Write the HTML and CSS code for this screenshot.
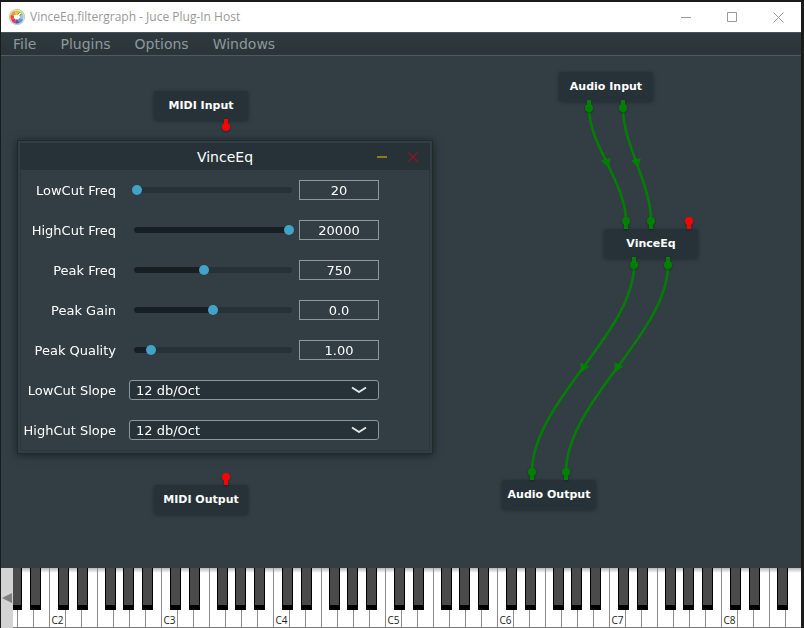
FILE: index.html
```html
<!DOCTYPE html>
<html lang="en">
<head>
<meta charset="utf-8">
<title>VinceEq.filtergraph - Juce Plug-In Host</title>
<link rel="stylesheet" href="styles.css">
</head>
<body>
<div class="app">
  <header class="titlebar">
    <svg class="logo" width="16" height="16" viewBox="0 0 16 16" aria-hidden="true">
      <circle cx="8" cy="8" r="8" fill="#b3cf9c"/>
      <circle cx="8" cy="8" r="7.200" fill="#f4f4ee"/>
      <path d="M8 8 5.600 1.800A6.600 6.600 0 0 1 10.400 1.800Z" fill="#ecc531"/>
      <path d="M8 8 10.400 1.800A6.600 6.600 0 0 1 14.200 5.600Z" fill="#b5cf6a"/>
      <path d="M8 8 14.200 5.600A6.600 6.600 0 0 1 14.200 10.400Z" fill="#a8bfe0"/>
      <path d="M8 8 14.200 10.400A6.600 6.600 0 0 1 10.400 14.200Z" fill="#4f9bdc"/>
      <path d="M8 8 10.400 14.200A6.600 6.600 0 0 1 5.600 14.200Z" fill="#6a4fae"/>
      <path d="M8 8 5.600 14.200A6.600 6.600 0 0 1 1.800 10.400Z" fill="#d93a78"/>
      <path d="M8 8 1.800 10.400A6.600 6.600 0 0 1 1.800 5.600Z" fill="#e8502e"/>
      <path d="M8 8 1.800 5.600A6.600 6.600 0 0 1 5.600 1.800Z" fill="#f09a30"/>
      <path d="M5 6.500L7 5.500L8.500 6L11 3.500L12 4.500L10.500 6.500L11 8.500L9.500 10.500H6.500L5 9Z" fill="#fff"/>
      <path d="M8.500 5.500L10.500 3.500M10.800 6.800L12 5" fill="none" stroke="#555" stroke-width=".7"/>
    </svg>
    <h1 class="titlebar-text">VinceEq.filtergraph - Juce Plug-In Host</h1>
    <div class="window-buttons">
      <button type="button" aria-label="Minimize"><svg width="11" height="11" viewBox="0 0 11 11"><path d="M0 5.500H10"/></svg></button>
      <button type="button" aria-label="Maximize"><svg width="11" height="11" viewBox="0 0 11 11"><path d="M.5.5h9v9h-9z"/></svg></button>
      <button type="button" aria-label="Close"><svg width="11" height="11" viewBox="0 0 11 11"><path d="M.5.5l10 10M10.500.5l-10 10"/></svg></button>
    </div>
  </header>

  <nav class="menubar" aria-label="Main menu">
    <button type="button">File</button>
    <button type="button">Plugins</button>
    <button type="button">Options</button>
    <button type="button">Windows</button>
  </nav>

  <main class="graph">
    <div class="node midi-input">MIDI Input</div>
    <div class="node midi-output">MIDI Output</div>
    <div class="node audio-input">Audio Input</div>
    <div class="node vince-eq">VinceEq</div>
    <div class="node audio-output">Audio Output</div>

    <svg class="wires" width="801" height="512" viewBox="1 56 801 512" aria-hidden="true">
      <defs>
        <g id="pin-out"><path d="M-2-8h4v7h-4z"/><circle r="4"/></g>
        <g id="pin-in"><path d="M-2 0h4v8h-4z"/><circle r="4"/></g>
        <path id="arrow" d="M-4-5v10L5 0z"/>
      </defs>
      <g class="wire">
        <path d="M589 108C589 145 626 183 626 221"/>
        <path d="M623 108C623 145 651 183 651 221"/>
        <path d="M634 265C634 333 532 402 532 472"/>
        <path d="M668 265C668 333 566 402 566 472"/>
      </g>
      <g class="audio">
        <use href="#arrow" transform="translate(607 163) rotate(72)"/>
        <use href="#arrow" transform="translate(637 163) rotate(76)"/>
        <use href="#arrow" transform="translate(583 368) rotate(116)"/>
        <use href="#arrow" transform="translate(617 368) rotate(116)"/>
      </g>
      <g class="audio pins">
        <use href="#pin-out" x="589" y="108"/>
        <use href="#pin-out" x="623" y="108"/>
        <use href="#pin-in" x="626" y="221"/>
        <use href="#pin-in" x="651" y="221"/>
        <use href="#pin-out" x="634" y="265"/>
        <use href="#pin-out" x="668" y="265"/>
        <use href="#pin-in" x="532" y="472"/>
        <use href="#pin-in" x="566" y="472"/>
      </g>
      <g class="midi pins">
        <use href="#pin-out" x="226" y="127"/>
        <use href="#pin-in" x="226" y="477"/>
        <use href="#pin-in" x="689" y="221"/>
      </g>
    </svg>

    <section class="plugin" aria-labelledby="plugin-title">
      <header class="plugin-bar">
        <h2 id="plugin-title">VinceEq</h2>
        <div class="plugin-buttons">
          <button type="button" aria-label="Minimize VinceEq"><svg width="12" height="12" viewBox="0 0 12 12"><path d="M1 6h10" stroke="#937a14" stroke-width="2"/></svg></button>
          <button type="button" aria-label="Close VinceEq"><svg width="12" height="12" viewBox="0 0 12 12"><path d="M1 1l10 10M11 1L1 11" stroke="#8b1520" stroke-width="1.300"/></svg></button>
        </div>
      </header>
      <form class="params">
        <div class="param">
          <label for="lowcut">LowCut Freq</label>
          <input id="lowcut" class="slider" type="range" min="0" max="1000" value="0" style="--fill:0%">
          <input class="value" type="text" value="20" aria-label="LowCut Freq value">
        </div>
        <div class="param">
          <label for="highcut">HighCut Freq</label>
          <input id="highcut" class="slider" type="range" min="0" max="1000" value="1000" style="--fill:100%">
          <input class="value" type="text" value="20000" aria-label="HighCut Freq value">
        </div>
        <div class="param">
          <label for="peak-freq">Peak Freq</label>
          <input id="peak-freq" class="slider" type="range" min="0" max="1000" value="439" style="--fill:44%">
          <input class="value" type="text" value="750" aria-label="Peak Freq value">
        </div>
        <div class="param">
          <label for="peak-gain">Peak Gain</label>
          <input id="peak-gain" class="slider" type="range" min="0" max="1000" value="500" style="--fill:50%">
          <input class="value" type="text" value="0.0" aria-label="Peak Gain value">
        </div>
        <div class="param">
          <label for="peak-quality">Peak Quality</label>
          <input id="peak-quality" class="slider" type="range" min="0" max="1000" value="91" style="--fill:10%">
          <input class="value" type="text" value="1.00" aria-label="Peak Quality value">
        </div>
        <div class="param">
          <label for="lowcut-slope">LowCut Slope</label>
          <div class="combo">
            <select id="lowcut-slope"><option>12 db/Oct</option></select>
            <svg width="16" height="8" viewBox="0 0 16 8" aria-hidden="true"><path d="M1 1.500L8 6L15 1.500"/></svg>
          </div>
        </div>
        <div class="param">
          <label for="highcut-slope">HighCut Slope</label>
          <div class="combo">
            <select id="highcut-slope"><option>12 db/Oct</option></select>
            <svg width="16" height="8" viewBox="0 0 16 8" aria-hidden="true"><path d="M1 1.500L8 6L15 1.500"/></svg>
          </div>
        </div>
      </form>
    </section>
  </main>

  <footer class="keyboard">
    <button type="button" class="scroll-left" aria-label="Lower octaves"><svg width="10" height="10" viewBox="0 0 10 10"><path d="M0 5L10 0V10Z" fill="#808080"/></svg></button>
    <div class="keys" id="keys"></div>
  </footer>
</div>
<script src="keyboard.js"></script>
</body>
</html>
```
FILE: keyboard.js
```js
// Builds the keys from C1 up to the top note, G8.
const keys = document.getElementById('keys');
const lastOctave = 8;
for (let octave = 1; octave <= lastOctave; octave++) {
  const isLast = octave === lastOctave;
  const group = document.createElement('div');
  group.className = 'octave';
  for (const note of isLast ? 'CDEFG' : 'CDEFGAB') {
    const key = document.createElement('div');
    key.className = 'white';
    if (note === 'C' && octave > 1) key.textContent = 'C' + octave;
    group.append(key);
  }
  for (const note of isLast ? ['cs', 'ds', 'fs'] : ['cs', 'ds', 'fs', 'gs', 'as']) {
    const key = document.createElement('div');
    key.className = 'black ' + note;
    group.append(key);
  }
  keys.append(group);
}
```
FILE: styles.css
```css
* {
  box-sizing: border-box;
}

body {
  margin: 0;
  background: #1c1b1c;
  font-family: "DejaVu Sans", Verdana, sans-serif;
  font-size: 13px;
  color: #fff;
}

button {
  display: flex;
  align-items: center;
  justify-content: center;
  padding: 0;
  border: 0;
  background: none;
  font: inherit;
  color: inherit;
}

h1,
h2 {
  margin: 0;
  font-weight: 400;
}

.app {
  display: flex;
  flex-direction: column;
  height: 100vh;
  padding: 2px 3px 0 1px;
}

/* Host window */

.titlebar {
  display: flex;
  align-items: center;
  flex: 0 0 30px;
  padding-left: 8px;
  background: #fff;
}

.titlebar-text {
  flex: 1;
  margin-left: 5px;
  font: 12px/16px "Open Sans", "Noto Sans", sans-serif;
  color: #999;
}

.window-buttons {
  display: flex;
}

.window-buttons button {
  width: 46px;
  height: 30px;
}

.window-buttons svg {
  fill: none;
  stroke: #999;
}

.menubar {
  display: flex;
  flex: 0 0 24px;
  gap: 24px;
  padding: 0 12px;
  border-top: 1px solid #46535a;
  border-bottom: 1px solid #4d5a5f;
  background: linear-gradient(#2e393e, #2a3439);
  font-size: 14px;
  color: #8e989b;
}

/* Graph canvas */

.graph {
  position: relative;
  flex: 1;
  min-height: 0;
  overflow: hidden;
  background: #323e44;
}

.node {
  position: absolute;
  width: 94px;
  border-radius: 3px;
  background: #263238;
  box-shadow: 0 1px 4px rgba(0, 0, 0, 0.35);
  font-size: 11px;
  font-weight: 700;
  line-height: 29px;
  text-align: center;
}

.midi-input {
  left: 153px;
  top: 35px;
}

.midi-output {
  left: 153px;
  top: 429px;
}

.audio-input {
  left: 558px;
  top: 16px;
}

.vince-eq {
  left: 603px;
  top: 173px;
}

.audio-output {
  left: 501px;
  top: 424px;
}

.wires {
  position: absolute;
  left: 0;
  top: 0;
  pointer-events: none;
}

.wire {
  fill: none;
  stroke: #008000;
  stroke-width: 2.5;
}

.audio {
  fill: #008000;
}

.midi {
  fill: #f00;
}

.pins {
  filter: drop-shadow(0 1px 1px rgba(0, 0, 0, 0.3));
}

/* Plug-in editor window */

.plugin {
  position: absolute;
  left: 16px;
  top: 84px;
  width: 416px;
  padding: 2px;
  border: 1px solid #20292d;
  background: #323e44;
  box-shadow: 0 1px 8px rgba(0, 0, 0, 0.5);
}

.plugin-bar {
  display: grid;
  grid-template-columns: 1fr auto 1fr;
  align-items: center;
  height: 27px;
  padding-top: 1px;
  background: #263238;
}

.plugin-bar h2 {
  grid-column: 2;
  font-size: 14px;
}

.plugin-buttons {
  display: flex;
  justify-content: flex-end;
  padding-right: 2px;
}

.plugin-buttons button {
  width: 31px;
  height: 26px;
}

.params {
  border: 1px solid #2c373c;
  border-top: 0;
}

.param {
  display: flex;
  align-items: center;
  height: 40px;
  padding-right: 50px;
}

.param label {
  flex: 0 0 95px;
  text-align: right;
}

.slider {
  flex: 1;
  min-width: 0;
  height: 6px;
  margin: 0 7px 0 18px;
  border-radius: 3px;
  appearance: none;
  background: linear-gradient(90deg, #181f22 var(--fill), #263238 var(--fill));
}

.slider::-webkit-slider-runnable-track {
  margin: 0 -2px;
}

.slider::-webkit-slider-thumb {
  width: 10px;
  height: 10px;
  border-radius: 50%;
  appearance: none;
  background: #42a2c8;
}

.value {
  width: 80px;
  height: 20px;
  padding: 0;
  border: 1px solid #8e989b;
  background: none;
  font: inherit;
  color: inherit;
  text-align: center;
}

.combo {
  display: grid;
  flex: 1;
  align-items: center;
  margin-left: 13px;
}

.combo select,
.combo svg {
  grid-area: 1 / 1;
}

.combo select {
  height: 20px;
  padding: 0 6px;
  border: 1px solid #8e989b;
  border-radius: 3px;
  appearance: none;
  background: #263238;
  font: inherit;
  color: inherit;
}

.combo svg {
  justify-self: end;
  margin-right: 12px;
  fill: none;
  stroke: #e4e6e7;
  stroke-width: 2;
  stroke-linejoin: round;
  pointer-events: none;
}

/* MIDI keyboard */

.keyboard {
  display: flex;
  flex: 0 0 60px;
  overflow: hidden;
}

.scroll-left {
  flex: 0 0 12px;
  background: #d3d3d3;
}

.keys {
  display: flex;
  flex: 1;
  min-width: 0;
  overflow: hidden;
}

.octave {
  position: relative;
  display: flex;
  flex: none;
}

.octave:first-child {
  margin-left: -76px;
}

.white {
  display: flex;
  align-items: flex-end;
  justify-content: center;
  flex: 0 0 16px;
  border-left: 1px solid #8c8c8c;
  border-bottom: 1px solid #777;
  background: linear-gradient(#b5b8b9, #fff 5px);
  font: 10px/14px "Open Sans", "Noto Sans", sans-serif;
  color: #222;
}

.black {
  position: absolute;
  top: 0;
  width: 11px;
  height: 42px;
  border: solid #000;
  border-width: 0 1px 5px;
  background: #4a4a4a;
}

.cs {
  left: 9px;
}

.ds {
  left: 28px;
}

.fs {
  left: 56px;
}

.gs {
  left: 74px;
}

.as {
  left: 93px;
}
```
